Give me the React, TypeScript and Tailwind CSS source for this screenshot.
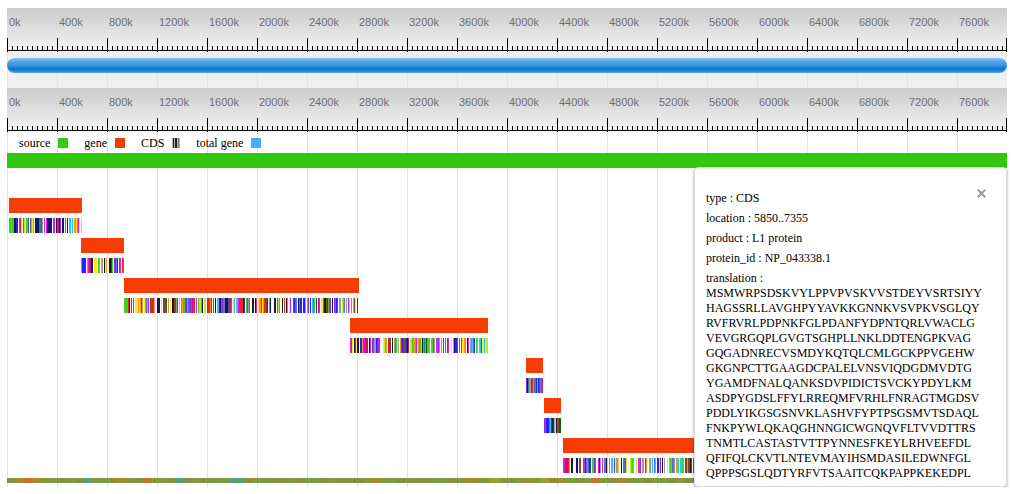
import React, { useState } from 'react';

type Gene = {
  start: number;
  end: number;
  // one letter per residue stripe, see STRIPE_COLORS
  stripes: string;
};

const MAX = 1000;

const LABELS = Array.from({ length: 20 }, (_, i) => `${i * 400}k`);

const STRIPE_COLORS: Record<string, string> = {
  a: '#9a9a9a',
  b: '#2a20f8',
  c: '#20ccf8',
  d: '#c81858',
  e: '#0c6410',
  g: '#40d018',
  k: '#1c1818',
  l: '#b4f028',
  m: '#e020e0',
  n: '#181468',
  o: '#fc9420',
  p: '#8c28e8',
  r: '#f42424',
  s: '#5074e4',
  t: '#2c8088',
  u: '#7c4c20',
  w: '#ffffff',
  y: '#fce820',
};

const GENES: Gene[] = [
  {
    start: 2,
    end: 75,
    stripes: 'ggaggnnbbwmrywmlwgapwtoycwnnnnttdawmwmknnnnwtmwnrdnpwnnwmwnwacwcwooygmywlwr',
  },
  { start: 74, end: 117, stripes: 'gbbbbwamddnnwyyywgcwoawkyowwkkegwppsbwpmwrscrdt' },
  {
    start: 117,
    end: 352,
    stripes:
      'ggggrkwrwrwyyyoyouowycsomwupdtowwnnnwywuuduwawywkkuuadwlwgoggrpgsrpmdmdwmwgllgnwllwdrrodwrwnwccnntpssnkkpdumwyawccmrrrrkbwgtaswwknwkmwyooryorrubwgnwwwnnwmlgwwkwrwkawymwwpbmswnmbbwbbcwapwbwcsgwbwdmwyyskkuegtpwnwpsbpwaawlcswawmlwgwouywbwdblwgbmw',
  },
  {
    start: 343,
    end: 481,
    stripes:
      'mrywnpyknwbbormdduwkmwpmacbdmrwwwylaowdduwkwasgyawopbduubndwllgaogmyogglkgtgeggcwagsawmspawcwdwmwdmwwywonbbpwmwryyocwnmwagcsbwgowocpyycyllwwpmawdpsat',
  },
  { start: 519, end: 536, stripes: 'pntcadratsbcbpsmd' },
  { start: 537, end: 554, stripes: 'pmbbbscbnbayktuee' },
  {
    start: 556,
    end: 731,
    stripes:
      'mmddrawnnwwnkwuuwtmnsgtbwggpmwmnawmwsklwgwcwpwaclwnwsspywwlogowlwmspwawrowwaycwscwbypwkwawywogcsawoocwcgawuuoukuwpgowyowcrwgrywoywrldudnpcsbcctswybbssbs',
  },
];

const TOTAL =
  'aoroggagatggaogarggatagaggttaggaagaggagaaagoggagaaggagoagygagogyaogagrgaoagaggagatagagyaggagogagagrgaggagatgyaggagogag';

const TOTAL_COLORS: Record<string, string> = {
  a: '#869040',
  g: '#7c9c3e',
  o: '#aa8a30',
  r: '#c0742c',
  t: '#58a070',
  y: '#a09a34',
};

const TRANSLATION = [
  'MSMWRPSDSKVYLPPVPVSKVVSTDEYVSRTSIYY',
  'HAGSSRLLAVGHPYYAVKKGNNKVSVPKVSGLQY',
  'RVFRVRLPDPNKFGLPDANFYDPNTQRLVWACLG',
  'VEVGRGQPLGVGTSGHPLLNKLDDTENGPKVAG',
  'GQGADNRECVSMDYKQTQLCMLGCKPPVGEHW',
  'GKGNPCTTGAAGDCPALELVNSVIQDGDMVDTG',
  'YGAMDFNALQANKSDVPIDICTSVCKYPDYLKM',
  'ASDPYGDSLFFYLRREQMFVRHLFNRAGTMGDSV',
  'PDDLYIKGSGSNVKLASHVFYPTPSGSMVTSDAQL',
  'FNKPYWLQKAQGHNNGICWGNQVFLTVVDTTRS',
  'TNMTLCASTASTVTTPYNNESFKEYLRHVEEFDL',
  'QFIFQLCKVTLNTEVMAYIHSMDASILEDWNFGL',
  'QPPPSGSLQDTYRFVTSAAITCQKPAPPKEKEDPL',
];

const Ruler: React.FC = () => (
  <div className="bg-gradient-to-b from-[#cacaca] to-[#f6f6f6]">
    <div className="flex pt-1.5 pb-2">
      {LABELS.map((label) => (
        <span
          key={label}
          className="min-w-0 flex-1 pl-0.5 font-['Liberation_Sans',Arial,sans-serif] text-[11px] leading-4 text-[#707070]"
        >
          {label}
        </span>
      ))}
    </div>
    <svg className="block h-3.5 w-full" shapeRendering="crispEdges" aria-hidden="true">
      {Array.from({ length: 200 }, (_, i) => {
        const major = i % 10 === 0;
        return <rect key={i} x={`${i / 2}%`} y={major ? 0 : 8} width="1" height={major ? 14 : 5} />;
      })}
      {/* closing tick sits inside the right edge */}
      <svg x="100%" overflow="visible">
        <rect x="-1" y="0" width="1" height="14" />
      </svg>
      <rect x="0" y="12" width="100%" height="1" />
    </svg>
  </div>
);

const Stripes: React.FC<{ code: string; colors: Record<string, string> }> = ({ code, colors }) => (
  <svg
    className="block h-full w-full"
    viewBox={`0 0 ${code.length} 10`}
    preserveAspectRatio="none"
    shapeRendering="crispEdges"
    aria-hidden="true"
  >
    {code.split('').map((c, i) => (
      <rect key={i} x={i} y="0" width="1" height="10" fill={colors[c]} />
    ))}
  </svg>
);

const GeneRows: React.FC<{ gene: Gene }> = ({ gene }) => {
  const span = {
    marginLeft: `${(gene.start / MAX) * 100}%`,
    width: `${((gene.end - gene.start) / MAX) * 100}%`,
  };

  return (
    <>
      <div className="h-[15px] bg-[#f73c00]" style={span} />
      <div className="h-[15px]" style={span}>
        <Stripes code={gene.stripes.slice(0, gene.end - gene.start)} colors={STRIPE_COLORS} />
      </div>
    </>
  );
};

const Legend: React.FC = () => (
  <ul className="flex h-[21px] items-center gap-4 pl-3 text-xs">
    <li className="flex items-center gap-2">
      source
      <span className="size-2.5 bg-[#33cc11]" />
    </li>
    <li className="flex items-center gap-2">
      gene
      <span className="size-2.5 bg-[#f73c00]" />
    </li>
    <li className="flex items-center gap-2">
      CDS
      <svg className="h-2.5 w-2" viewBox="0 0 8 10" shapeRendering="crispEdges" aria-hidden="true">
        <rect width="8" height="10" fill="#b0b0b0" />
        <path d="M1 0h1v10h-1zM3 0h2v10h-2z" fill="#222222" />
        <path d="M6 0h1v10h-1z" fill="#777777" />
      </svg>
    </li>
    <li className="flex items-center gap-2">
      total gene
      <span className="size-2.5 bg-[#4fa8fb]" />
    </li>
  </ul>
);

const DetailPopup: React.FC<{ onClose: () => void }> = ({ onClose }) => (
  <div
    role="dialog"
    className="absolute top-3.5 right-0 w-[313px] rounded border border-[#dcdcdc] bg-white px-[11px] pt-[23px] pb-[5px] text-xs leading-[15px] shadow-[0_1px_3px_rgba(0,0,0,0.4)]"
  >
    <button
      type="button"
      aria-label="Close"
      onClick={onClose}
      className="absolute top-4 right-4 flex size-[18px] items-center justify-center"
    >
      <svg className="size-[9px]" viewBox="0 0 9 9" fill="none" stroke="#999999" strokeWidth="2">
        <path d="M0.8 0.8L8.2 8.2M8.2 0.8L0.8 8.2" />
      </svg>
    </button>
    <div className="flex flex-col gap-[5px]">
      <p>type : CDS</p>
      <p>location : 5850..7355</p>
      <p>product : L1 protein</p>
      <p>protein_id : NP_043338.1</p>
      <div>
        <p>translation :</p>
        {TRANSLATION.map((line) => (
          <p key={line}>{line}</p>
        ))}
      </div>
    </div>
  </div>
);

export default function App() {
  const [showDetail, setShowDetail] = useState(true);

  return (
    <main className="bg-white pt-2 pr-[5px] pl-[7px] font-['Liberation_Serif','Times_New_Roman',serif] text-black">
      <Ruler />
      <div className="h-9 bg-[#f0f0f0] bg-[linear-gradient(to_right,#e4e4e4_1px,transparent_1px)] bg-[length:5%_100%] pt-1.5">
        <button
          type="button"
          aria-label="Visible range"
          className="block h-[15px] w-full cursor-grab rounded-full bg-[linear-gradient(to_bottom,#8cc4f4_0%,#4fa4ec_25%,#3a96e2_50%,#1478cc_70%,#1a80d4_82%,#5aa8e4_100%)]"
        />
      </div>

      {/* Zoomed region */}
      <Ruler />
      <div className="bg-[linear-gradient(to_right,#e2e2e2_1px,transparent_1px)] bg-[length:5%_100%]">
        <Legend />
        <div className="relative pb-1">
          <div className="h-[15px] bg-[#33c810]" />
          <div className="flex flex-col gap-[5px] pt-[30px]">
            {GENES.map((gene) => (
              <GeneRows key={gene.start} gene={gene} />
            ))}
            <div className="h-[5px]">
              <Stripes code={TOTAL} colors={TOTAL_COLORS} />
            </div>
          </div>
          {showDetail && <DetailPopup onClose={() => setShowDetail(false)} />}
        </div>
      </div>
    </main>
  );
}
